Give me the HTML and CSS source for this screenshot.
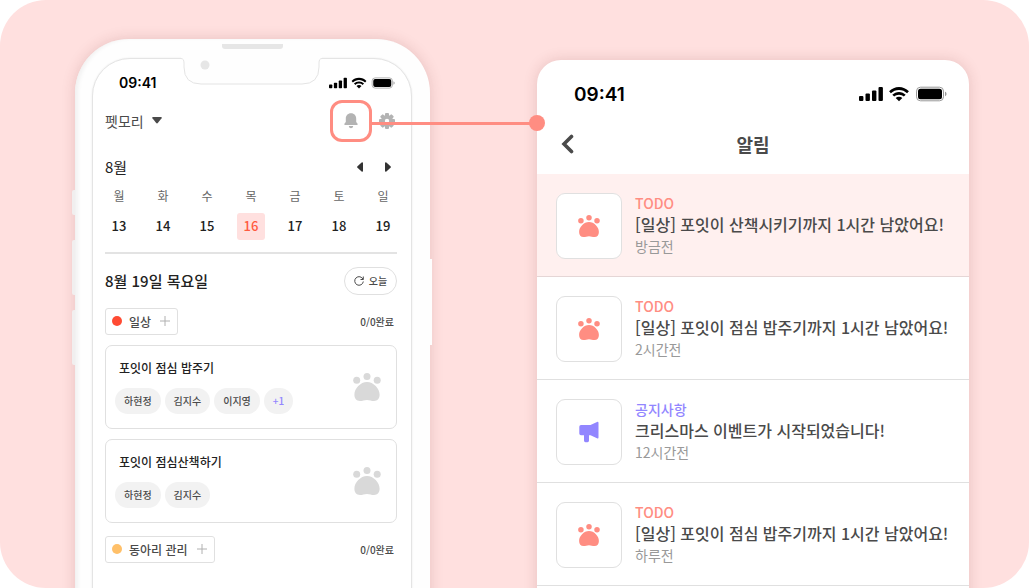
FILE: index.html
```html
<!DOCTYPE html>
<html lang="ko">
<head>
<meta charset="utf-8">
<meta name="viewport" content="width=device-width, initial-scale=1">
<title>펫모리 알림</title>
<link rel="stylesheet" href="styles.css">
</head>
<body>
<svg class="sprite" aria-hidden="true">
  <symbol id="paw" viewBox="0 0 28 28">
    <circle cx="3.7" cy="7.2" r="3.5"/><circle cx="14" cy="3.6" r="3.5"/><circle cx="24.2" cy="7.2" r="3.5"/>
    <path d="M14 9C20.5 9 26.600 15.500 26.600 21.600C26.600 25.500 24.600 28 21 28C18.300 28 16.800 26.900 14 26.900C11.200 26.900 9.700 28 7 28C3.400 28 1.400 25.500 1.400 21.600C1.400 15.500 7.500 9 14 9Z"/>
  </symbol>
  <symbol id="status" viewBox="0 0 88 16">
    <rect x="0" y="10" width="4.400" height="5" rx="1"/><rect x="6.500" y="7.500" width="4.400" height="7.500" rx="1"/><rect x="13" y="4.500" width="4.400" height="10.500" rx="1"/><rect x="19.500" y="1" width="4.400" height="14" rx="1"/>
    <path d="M40 3.900C43.100 3.900 46 5.100 48.100 7.200L49.900 5.300C47.300 2.600 43.800 1 40 1C36.200 1 32.700 2.600 30.100 5.300L31.900 7.200C34 5.100 36.900 3.900 40 3.900Z"/>
    <path d="M40 8.700C41.800 8.700 43.500 9.400 44.800 10.600L46.700 8.700C44.900 7 42.600 5.900 40 5.900C37.400 5.900 35.100 7 33.300 8.700L35.200 10.600C36.500 9.400 38.200 8.700 40 8.700Z"/>
    <path d="M40 15.200L43.300 11.900C42.400 11.100 41.300 10.700 40 10.700C38.700 10.700 37.600 11.100 36.700 11.900Z"/>
    <rect x="57.500" y="1.200" width="27" height="13.600" rx="4" fill="none" stroke="#999"/>
    <rect x="59" y="2.700" width="24" height="10.600" rx="2.500"/><path d="M86 5.800C88 6.400 88 9.600 86 10.200Z" fill="#999"/>
  </symbol>
</svg>

<main class="stage">
  <section class="phone" aria-label="펫모리 일정">
    <span class="key key-mute"></span><span class="key key-up"></span><span class="key key-down"></span><span class="key key-power"></span>
    <span class="speaker"></span>
    <div class="screen">
      <svg class="notch" viewBox="0 -2 141 29" aria-hidden="true">
        <path d="M0 -2H141V1Q138 1 138 5V9Q138 26 121 26H20Q3 26 3 9V5Q3 1 0 1Z" fill="#fefefe"/>
        <path d="M0 .5Q3 .5 3 5V9Q3 26 20 26H121Q138 26 138 9V5Q138 .5 141 .5" fill="none" stroke="#e4e4e4"/>
        <circle cx="24" cy="7" r="4.500" fill="#e6e6e6"/>
      </svg>
      <div class="status">
        <time>09:41</time>
        <svg class="status-icons" aria-hidden="true"><use href="#status"/></svg>
      </div>
      <header class="bar">
        <button class="picker" type="button">펫모리
          <svg viewBox="0 0 10 7" width="10" height="7" aria-hidden="true"><path d="M1 0H9Q10.400 0 9.600 1.200L6 5.800Q5 7 4 5.800L.4 1.200Q-.4 0 1 0Z" fill="#4a4a4a"/></svg>
        </button>
        <button class="bell" type="button" aria-label="알림">
          <svg viewBox="0 0 14 16" width="14" height="16" aria-hidden="true"><path d="M7 .3C10.300 .3 12.200 2.700 12.200 5.800V9L13.600 10.800Q14 12 13 12H1Q0 12 .4 10.800L1.800 9V5.800C1.800 2.700 3.700 .3 7 .3ZM4.800 13H9.200C9 14.500 8.100 15.200 7 15.200C5.900 15.200 5 14.500 4.800 13Z" fill="#b3b3b3"/></svg>
        </button>
        <button class="gear" type="button" aria-label="설정">
          <svg viewBox="0 0 16 16" width="16" height="16" aria-hidden="true"><g fill="#b3b3b3"><rect x="6" y="0" width="4" height="16" rx="1"/><rect x="6" y="0" width="4" height="16" rx="1" transform="rotate(45 8 8)"/><rect x="6" y="0" width="4" height="16" rx="1" transform="rotate(90 8 8)"/><rect x="6" y="0" width="4" height="16" rx="1" transform="rotate(135 8 8)"/><circle cx="8" cy="8" r="6"/></g><circle cx="8" cy="8" r="2.200" fill="#fff"/></svg>
        </button>
      </header>
      <div class="month">
        <h2>8월</h2>
        <button type="button" aria-label="이전 주"><svg viewBox="0 0 6 10" width="6" height="10"><path d="M6 1V9Q5.700 10.300 4.600 9.500L.5 5.800Q-.3 5 .5 4.200L4.600 .5Q5.700 -.3 6 1Z" fill="#333"/></svg></button>
        <button type="button" aria-label="다음 주"><svg viewBox="0 0 6 10" width="6" height="10"><path d="M0 1V9Q.3 10.300 1.400 9.500L5.500 5.800Q6.300 5 5.500 4.200L1.400 .5Q.3 -.3 0 1Z" fill="#333"/></svg></button>
      </div>
      <table class="week">
        <thead><tr><th>월</th><th>화</th><th>수</th><th>목</th><th>금</th><th>토</th><th>일</th></tr></thead>
        <tbody><tr>
          <td><button type="button">13</button></td><td><button type="button">14</button></td><td><button type="button">15</button></td><td><button type="button" class="selected">16</button></td><td><button type="button">17</button></td><td><button type="button">18</button></td><td><button type="button">19</button></td>
        </tr></tbody>
      </table>
      <div class="day">
        <h1>8월 19일 목요일</h1>
        <button class="today" type="button">
          <svg viewBox="0 0 10 10" width="10" height="10" aria-hidden="true"><path d="M9 3.300A4.300 4.300 0 1 0 9.300 5.500M9.300 .5V3.500H6.500" fill="none" stroke="#4a4a4a"/></svg>오늘
        </button>
      </div>
      <div class="group">
        <button class="tag" type="button"><i class="dot dot-red"></i>일상<svg viewBox="0 0 10 10" width="10" height="10" aria-hidden="true"><path d="M5 0V10M0 5H10" stroke="#b0b0b0"/></svg></button>
        <span class="count">0/0완료</span>
      </div>
      <article class="card">
        <div>
          <h3>포잇이 점심 밥주기</h3>
          <ul><li>하현정</li><li>김지수</li><li>이지영</li><li class="more">+1</li></ul>
        </div>
        <svg class="card-paw" aria-hidden="true"><use href="#paw"/></svg>
      </article>
      <article class="card">
        <div>
          <h3>포잇이 점심산책하기</h3>
          <ul><li>하현정</li><li>김지수</li></ul>
        </div>
        <svg class="card-paw" aria-hidden="true"><use href="#paw"/></svg>
      </article>
      <div class="group">
        <button class="tag" type="button"><i class="dot dot-amber"></i>동아리 관리<svg viewBox="0 0 10 10" width="10" height="10" aria-hidden="true"><path d="M5 0V10M0 5H10" stroke="#b0b0b0"/></svg></button>
        <span class="count">0/0완료</span>
      </div>
    </div>
  </section>

  <span class="connector"></span>

  <section class="panel" aria-label="알림 목록">
    <div class="panel-status">
      <time>09:41</time>
      <svg class="panel-status-icons" aria-hidden="true"><use href="#status"/></svg>
    </div>
    <header class="panel-bar">
      <button type="button" aria-label="뒤로"><svg viewBox="0 0 14 20" width="14" height="20"><path d="M11.500 2.500L4 10L11.500 17.500" fill="none" stroke="#4a4a4a" stroke-width="3.600" stroke-linecap="round"/></svg></button>
      <h2>알림</h2>
    </header>
    <ul class="notices">
      <li class="unread">
        <span class="thumb"><svg class="paw" aria-hidden="true"><use href="#paw"/></svg></span>
        <div><p class="kind">TODO</p><p class="message">[일상] 포잇이 산책시키기까지 1시간 남았어요!</p><p class="when">방금전</p></div>
      </li>
      <li>
        <span class="thumb"><svg class="paw" aria-hidden="true"><use href="#paw"/></svg></span>
        <div><p class="kind">TODO</p><p class="message">[일상] 포잇이 점심 밥주기까지 1시간 남았어요!</p><p class="when">2시간전</p></div>
      </li>
      <li>
        <span class="thumb"><svg viewBox="0 0 20 22" width="20" height="22" aria-hidden="true"><path d="M2 4H11.500L18 .9Q19.500 .3 19.500 2V16.500Q19.500 18 18 17.300L11.500 14.200H10V19.500Q10 21.300 8.500 21.300H6.500Q5 21.300 5 19.500V14.200H2Q.3 14.200 .3 12.500V5.700Q.3 4 2 4Z" fill="#9286ff"/></svg></span>
        <div><p class="kind kind-news">공지사항</p><p class="message">크리스마스 이벤트가 시작되었습니다!</p><p class="when">12시간전</p></div>
      </li>
      <li>
        <span class="thumb"><svg class="paw" aria-hidden="true"><use href="#paw"/></svg></span>
        <div><p class="kind">TODO</p><p class="message">[일상] 포잇이 점심 밥주기까지 1시간 남았어요!</p><p class="when">하루전</p></div>
      </li>
    </ul>
  </section>
</main>
</body>
</html>
```

FILE: styles.css
```css
* { box-sizing: border-box; }

body {
  margin: 0;
  background: #fff;
  color: #222;
  font-family: "Noto Sans CJK KR", sans-serif;
  font-weight: 500;
}

h1, h2, h3, p, ul { margin: 0; padding: 0; font-weight: 500; }
ul { list-style: none; }
button { padding: 0; border: 0; background: none; color: inherit; font: inherit; cursor: pointer; }
svg { display: block; flex: none; }
.sprite { position: absolute; width: 0; height: 0; }

.stage {
  display: grid;
  grid-template-columns: 75fr 355fr 107fr 432fr 60fr;
  grid-template-rows: 100%;
  height: 100vh;
  overflow: hidden;
  border-radius: 46px;
  background: #ffe0df;
}

/* Phone frame */
.phone {
  position: relative;
  grid-area: 1 / 2;
  min-height: 100vh;
  margin-top: 39px;
  padding: 19px 18px 0 17px;
  border-radius: 54px 54px 0 0;
  background: #fefefe;
  box-shadow: 0 0 14px rgba(120, 50, 50, .18), inset 4px 0 5px -2px #ededed;
}
.key { position: absolute; left: -3px; width: 3px; border-radius: 2px 0 0 2px; background: #f1efef; }
.key-mute { top: 151px; height: 25px; }
.key-up { top: 201px; height: 55px; }
.key-down { top: 271px; height: 55px; }
.key-power { top: 220px; right: -2px; left: auto; width: 2px; height: 86px; border-radius: 0; background: #fefefe; }
.speaker { position: absolute; top: 5px; left: 50%; width: 61px; height: 5px; margin-left: -31px; border-radius: 0 0 3px 3px; background: #e6e6e6; }

.screen {
  position: relative;
  min-height: 100%;
  padding: 11px 14px 0 12px;
  border: 1px solid #e4e4e4;
  border-radius: 38px 38px 0 0;
  background: #fff;
  box-shadow: 0 0 2px #e9e9e9;
}
.notch { position: absolute; top: -3px; left: 50%; width: 141px; height: 29px; margin-left: -71px; }

.status { display: flex; align-items: center; justify-content: space-between; height: 25px; padding: 0 2px 0 14px; }
time { color: #000; font-family: Inter, sans-serif; font-weight: 600; }
.status time { font-size: 14px; }
.status-icons { width: 66px; height: 12px; }

.bar { display: flex; align-items: center; height: 51px; color: #4a4a4a; font-size: 14px; font-weight: 400; }
.picker { display: flex; align-items: center; gap: 8px; margin-right: auto; }
.bell { display: grid; place-items: center; width: 42px; height: 42px; margin-right: 7px; border: 3px solid #ff8d82; border-radius: 12px; }
.gear { margin-right: 2px; }

.month { display: flex; align-items: center; gap: 22px; height: 42px; padding-right: 6px; }
.month h2 { margin-right: auto; font-size: 15px; font-weight: 400; line-height: 20px; }

.week { width: calc(100% + 16px); margin: 0 -8px; border-collapse: collapse; table-layout: fixed; text-align: center; }
.week th { height: 21px; padding: 0; color: #666; font-size: 12px; font-weight: 400; line-height: 16px; vertical-align: top; }
.week td { padding: 3px 0 12px; }
.week button { width: 28px; height: 27px; border-radius: 3px; font-size: 13px; line-height: 24px; }
.week .selected { background: #ffe0df; color: #ff5a40; }

.day { display: flex; align-items: center; justify-content: space-between; height: 56px; border-top: 2px solid #e3e3e3; }
.day h1 { font-size: 15px; }
.today { display: flex; align-items: center; justify-content: center; gap: 5px; width: 53px; height: 28px; border: 1px solid #e0e0e0; border-radius: 14px; color: #4a4a4a; font-size: 10px; }

.group { display: flex; align-items: center; justify-content: space-between; color: #4a4a4a; font-size: 12px; }
.tag { display: flex; align-items: center; height: 27px; padding: 0 7px 0 6px; border: 1px solid #e0e0e0; border-radius: 3px; }
.tag svg { margin-left: 9px; }
.dot { width: 10px; height: 10px; margin-right: 7px; border-radius: 50%; }
.dot-red { background: #ff4b33; }
.dot-amber { background: #ffc069; }
.count { margin-right: 3px; font-size: 10px; }

.card { display: flex; align-items: center; justify-content: space-between; height: 84px; margin: 10px 0; padding: 0 15px 0 9px; border: 1px solid #e0e0e0; border-radius: 7px; }
.card + .card { margin-bottom: 13px; }
.card h3 { padding-left: 4px; font-size: 12px; line-height: 18px; }
.card ul { display: flex; gap: 4px; margin-top: 11px; }
.card li { padding: 0 9px; border-radius: 13px; background: #f2f2f2; color: #4a4a4a; font-size: 10px; line-height: 26px; }
.card .more { color: #9286ff; }
.card-paw { width: 28px; height: 28px; fill: #d9d9d9; }

/* Callout line from the bell to the enlarged notification list */
.connector { position: relative; z-index: 2; grid-area: 1 / 3; height: 3px; margin: 122px 0 0 -60px; background: #ff8d82; }
.connector::after { content: ""; position: absolute; top: -7px; right: -8px; width: 16px; height: 16px; border-radius: 50%; background: #ff8d82; }

/* Notification list */
.panel {
  grid-area: 1 / 4;
  min-height: 100vh;
  margin-top: 60px;
  overflow: hidden;
  border-radius: 24px 24px 0 0;
  background: #fff;
  box-shadow: 0 0 14px rgba(120, 50, 50, .18);
}
.panel-status { display: flex; align-items: center; justify-content: space-between; height: 54px; padding: 14px 22px 0 37px; }
.panel-status time { font-size: 19px; }
.panel-status-icons { width: 88px; height: 16px; }
.panel-bar { display: grid; grid-template-columns: 1fr auto 1fr; align-items: center; height: 60px; padding: 0 23px; }
.panel-bar button { justify-self: start; }
.panel-bar h2 { color: #4a4a4a; font-size: 18px; font-weight: 700; }

.notices li { display: flex; gap: 13px; padding: 19px 19px 17px; border-bottom: 1px solid #e0e0e0; }
.notices .unread { border-color: #e5d6d6; background: #fff0ef; }
.thumb { display: grid; place-items: center; flex: none; width: 66px; height: 66px; border: 1px solid #e0e0e0; border-radius: 9px; background: #fff; }
.paw { width: 22px; height: 22px; fill: #ff8d82; }
.kind { color: #ff8d82; font-size: 14px; line-height: 20px; }
.kind-news { color: #9286ff; }
.message { color: #4a4a4a; font-size: 16px; line-height: 22px; white-space: nowrap; }
.when { color: #999; font-size: 14px; font-weight: 400; line-height: 23px; }
```
